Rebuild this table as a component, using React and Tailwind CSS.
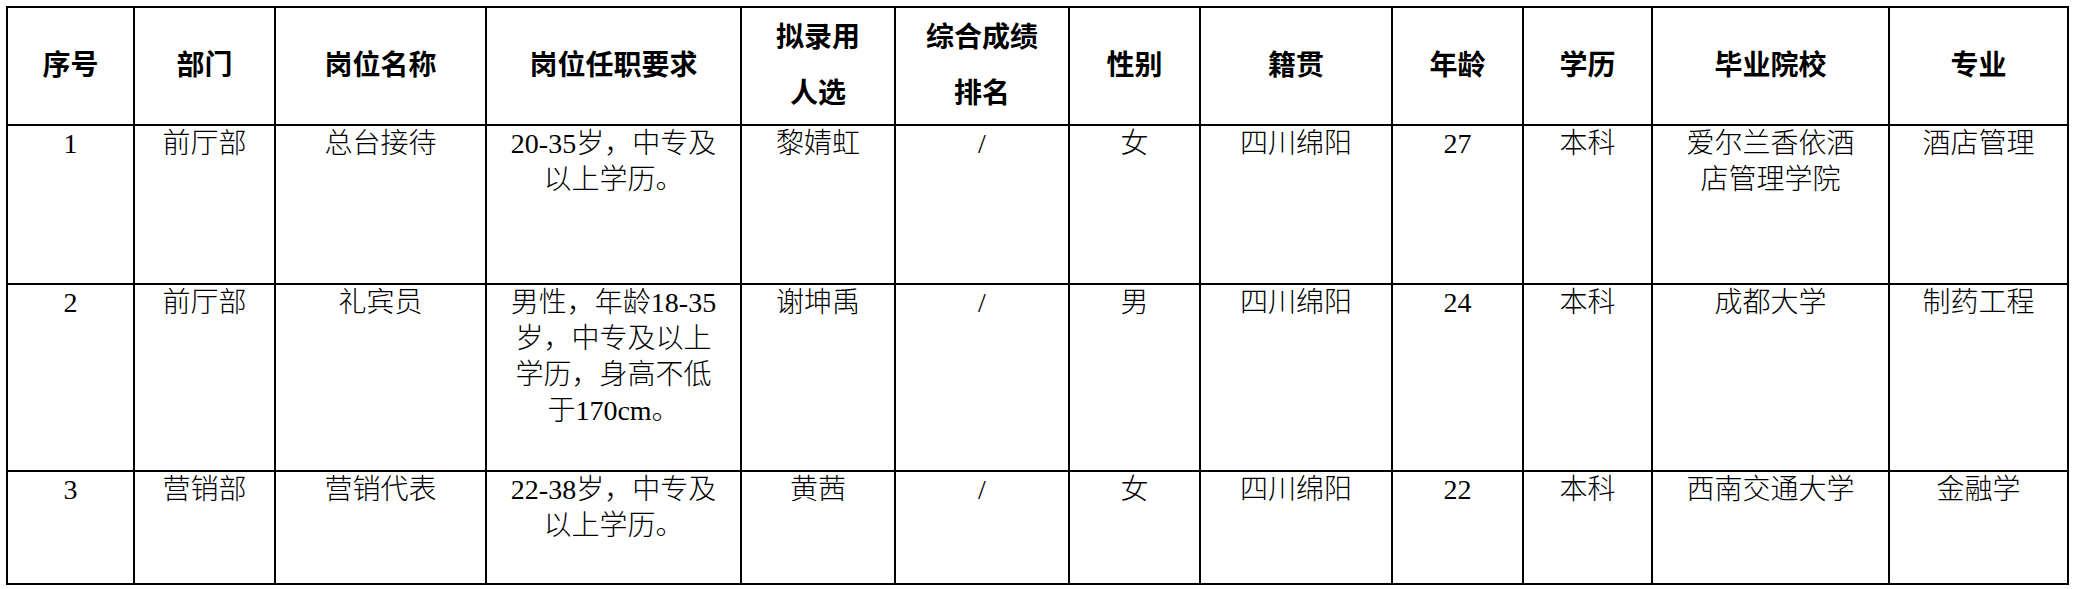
import React from "react";

const headers = [
  ["序号"],
  ["部门"],
  ["岗位名称"],
  ["岗位任职要求"],
  ["拟录用", "人选"],
  ["综合成绩", "排名"],
  ["性别"],
  ["籍贯"],
  ["年龄"],
  ["学历"],
  ["毕业院校"],
  ["专业"],
];

const rows = [
  [
    ["1"],
    ["前厅部"],
    ["总台接待"],
    ["20-35岁，中专及", "以上学历。"],
    ["黎婧虹"],
    ["/"],
    ["女"],
    ["四川绵阳"],
    ["27"],
    ["本科"],
    ["爱尔兰香依酒", "店管理学院"],
    ["酒店管理"],
  ],
  [
    ["2"],
    ["前厅部"],
    ["礼宾员"],
    ["男性，年龄18-35", "岁，中专及以上", "学历，身高不低", "于170cm。"],
    ["谢坤禹"],
    ["/"],
    ["男"],
    ["四川绵阳"],
    ["24"],
    ["本科"],
    ["成都大学"],
    ["制药工程"],
  ],
  [
    ["3"],
    ["营销部"],
    ["营销代表"],
    ["22-38岁，中专及", "以上学历。"],
    ["黄茜"],
    ["/"],
    ["女"],
    ["四川绵阳"],
    ["22"],
    ["本科"],
    ["西南交通大学"],
    ["金融学"],
  ],
];

export default function App() {
  return (
    <div className="w-[2075px] h-[589px] bg-white pt-[6px] pl-[6px] text-black font-['Liberation_Serif','Noto_Sans_CJK_SC',serif]">
      <div className="grid w-max grid-cols-[127px_141px_211px_255px_154px_174px_131px_192px_131px_129px_237px_179px] grid-rows-[118px_159px_187px_113px] border-l-2 border-t-2 border-black">
        {headers.map((h, i) => (
          <div
            key={"h" + i}
            className="flex flex-col items-center justify-center border-r-2 border-b-2 border-black text-[28px] font-bold leading-[56px]"
          >
            {h.map((line, j) => (
              <span key={j}>{line}</span>
            ))}
          </div>
        ))}
        {rows.map((r, ri) =>
          r.map((cell, ci) => (
            <div
              key={ri + "-" + ci}
              className="flex flex-col items-center border-r-2 border-b-2 border-black text-[28px] font-light leading-[36px]"
            >
              {cell.map((line, j) => (
                <span key={j} className="whitespace-nowrap">{line}</span>
              ))}
            </div>
          ))
        )}
      </div>
    </div>
  );
}
